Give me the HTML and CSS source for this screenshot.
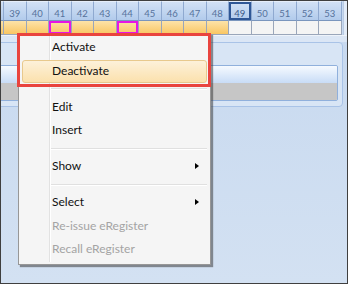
FILE: index.html
```html
<!DOCTYPE html>
<html>
<head>
<meta charset="utf-8">
<link rel="stylesheet" href="styles.css">
</head>
<body>
<div class="frame">
  <div class="grid">
    <div class="row head">
      <div class="cell stub"></div>
      <div class="cell">39</div>
      <div class="cell">40</div>
      <div class="cell">41</div>
      <div class="cell">42</div>
      <div class="cell">43</div>
      <div class="cell">44</div>
      <div class="cell">45</div>
      <div class="cell">46</div>
      <div class="cell">47</div>
      <div class="cell">48</div>
      <div class="cell sel">49</div>
      <div class="cell">50</div>
      <div class="cell">51</div>
      <div class="cell">52</div>
      <div class="cell">53</div>
      <div class="fill"></div>
    </div>
    <div class="row data">
      <div class="cell stub on"></div>
      <div class="cell on"></div>
      <div class="cell on"></div>
      <div class="cell on mark"></div>
      <div class="cell on"></div>
      <div class="cell on"></div>
      <div class="cell on mark"></div>
      <div class="cell on"></div>
      <div class="cell on"></div>
      <div class="cell on"></div>
      <div class="cell on"></div>
      <div class="cell"></div>
      <div class="cell"></div>
      <div class="cell"></div>
      <div class="cell"></div>
      <div class="cell"></div>
      <div class="fill"></div>
    </div>
  </div>
  <div class="gap"></div>
  <div class="panel">
    <div class="bar">
      <div class="bar-top"></div>
      <div class="bar-bot"></div>
    </div>
  </div>

  <div class="menu">
    <div class="item">Activate</div>
    <div class="item hot">Deactivate</div>
    <div class="sep"></div>
    <div class="item">Edit</div>
    <div class="item">Insert</div>
    <div class="sep"></div>
    <div class="item">Show<span class="arrow"></span></div>
    <div class="sep"></div>
    <div class="item">Select<span class="arrow"></span></div>
    <div class="item off">Re-issue eRegister</div>
    <div class="item off">Recall eRegister</div>
  </div>
  <div class="callout"></div>
</div>
</body>
</html>
```
FILE: styles.css
```css
html, body {
  margin: 0;
  padding: 0;
}
.frame {
  position: relative;
  width: 348px;
  height: 284px;
  box-sizing: border-box;
  border: 1px solid #3f3f3f;
  overflow: hidden;
  background: linear-gradient(#c6d8ef, #d3e1f2);
  font-family: Lato, "Open Sans", sans-serif;
}
.grid {
  display: flex;
  flex-direction: column;
}
.row {
  display: flex;
}
.cell {
  flex: 0 0 22.5px;
  box-sizing: border-box;
}
.cell.stub {
  flex-basis: 3px;
}
.fill {
  flex: 1 1 auto;
  background: #e3ecf8;
  border-left: 1px solid #b9cbe4;
  margin-left: 1.5px;
}
.head {
  height: 20px;
}
.head .cell {
  border-top: 1px solid #e6eef9;
  border-right: 1px solid #8fa9d0;
  border-bottom: 1px solid #7a95bd;
  background: linear-gradient(#d2e1f5, #b2cbec);
  color: #56729c;
  font-size: 9.5px;
  display: flex;
  align-items: flex-end;
  justify-content: center;
  padding-bottom: 1px;
  line-height: 10px;
}
.head .cell.sel {
  box-shadow: inset 0 0 0 2px #2f5796;
  color: #3b5a8a;
}
.data {
  height: 14px;
}
.data .cell {
  border-right: 1px solid #9aa6ba;
  border-bottom: 1px solid #9aa6ba;
  background: #f4f4f4;
}
.data .cell.on {
  background: linear-gradient(#fde3a8, #f9c663);
}
.data .cell.mark {
  box-shadow: inset 0 0 0 2px #e616e6;
}
.gap {
  height: 7px;
  background: linear-gradient(#eef3fa 0, #eef3fa 1px, #dbe6f5 1px);
}
.panel {
  margin: 0 4px 0 -6px;
  border: 1px solid #a9c3e7;
  border-radius: 4px;
  background: #d8e5f5;
  padding: 22px 4px 5px 0;
}
.bar {
  border: 1px solid #90b0dc;
  border-radius: 2px;
  display: flex;
  flex-direction: column;
  overflow: hidden;
}
.bar-top {
  height: 17px;
  background: linear-gradient(#f6faff, #c8dcf6);
}
.bar-bot {
  height: 17px;
  background: #c6c6c6;
}

.menu {
  position: absolute;
  left: 17px;
  top: 32px;
  width: 193px;
  box-sizing: border-box;
  border: 1px solid #979797;
  background: #f5f5f5;
  padding: 2px 3px;
  box-shadow: 2px 2px 1px rgba(60, 60, 60, 0.55);
  font-size: 12px;
  color: #111;
}
.menu::before {
  content: "";
  position: absolute;
  left: 30px;
  top: 2px;
  bottom: 2px;
  width: 1px;
  background: #e2e2e2;
  border-right: 1px solid #ffffff;
}
.item {
  position: relative;
  height: 23.5px;
  box-sizing: border-box;
  padding-left: 30px;
  display: flex;
  align-items: center;
  line-height: 14px;
  padding-bottom: 1px;
}
.item.hot {
  border: 1px solid #e8c98d;
  border-radius: 3px;
  background: linear-gradient(#fdf1da, #fbe1ad);
  padding-left: 29px;
}
.item.off {
  color: #a4a4a4;
}
.arrow {
  position: absolute;
  right: 8px;
  top: 8px;
  width: 0;
  height: 0;
  border-left: 4px solid #000;
  border-top: 3.5px solid transparent;
  border-bottom: 3.5px solid transparent;
}
.sep {
  height: 12.5px;
  display: flex;
  align-items: center;
  padding-left: 27px;
}
.sep::after {
  content: "";
  flex: 1 1 auto;
  height: 1px;
  background: #e0e0e0;
  border-bottom: 1px solid #ffffff;
}
.callout {
  position: absolute;
  left: 16px;
  top: 31.5px;
  width: 194px;
  height: 54.5px;
  box-sizing: border-box;
  border: 3px solid #e9443e;
}
```
